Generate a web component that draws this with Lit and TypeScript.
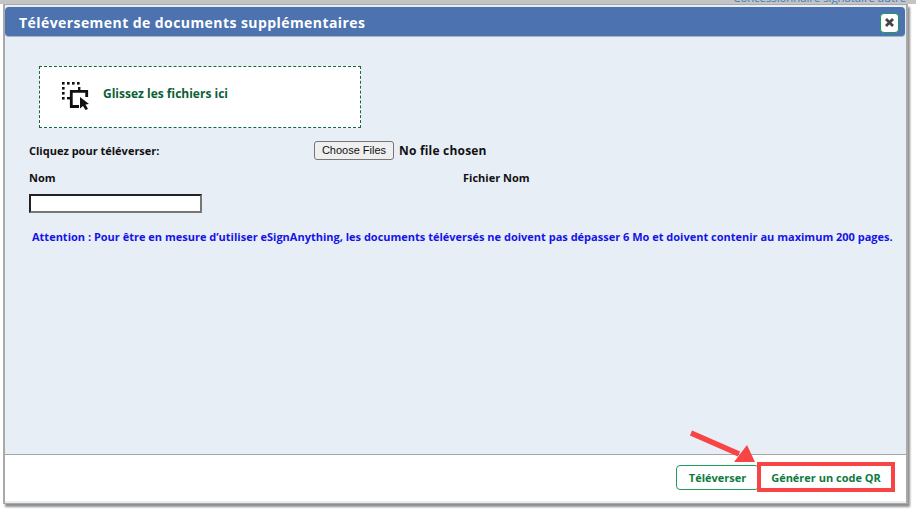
import { LitElement, html, css } from "lit";
import { customElement } from "lit/decorators.js";

@customElement("app-root")
export class AppRoot extends LitElement {
  static styles = css`
    :host {
      display: block;
      position: relative;
      width: 916px;
      height: 511px;
      overflow: hidden;
      background: #fff;
      font-family: "Open Sans", sans-serif;
      font-weight: 700;
      color: #111;
    }
    .behind {
      height: 4px;
      box-sizing: border-box;
      background: #c4c4c4;
      overflow: hidden;
      display: flex;
      justify-content: flex-end;
      padding-right: 10px;
      font: 400 11.3px/11px "Open Sans", sans-serif;
      color: #3a7cc0;
      white-space: nowrap;
    }
    .behind span { margin-top: -8px; }
    .dialog {
      box-sizing: border-box;
      width: 905px;
      height: 500px;
      margin-left: 3px;
      border: 1px solid #a9a9a9;
      border-left-width: 2px;
      border-right-width: 2px;
      background: #e8eef6;
      padding-top: 2px;
      display: flex;
      flex-direction: column;
      box-shadow: 2px 3px 2px #8f8f8f;
    }
    .header {
      height: 30px;
      flex: none;
      box-sizing: border-box;
      background: #4c72b0;
      border-radius: 4px;
      border-bottom: 1px solid #a9b3c2;
      display: flex;
      align-items: center;
      justify-content: space-between;
      padding: 2px 6px 0 14px;
      margin-right: 1px;
    }
    .title {
      color: #fff;
      font-size: 14px;
      letter-spacing: 0.43px;
    }
    .close {
      width: 19px;
      height: 20px;
      box-sizing: border-box;
      background: #fff;
      border: 1px solid #1e9a5a;
      border-radius: 4px;
      display: flex;
      align-items: center;
      justify-content: center;
    }
    .body {
      flex: 1;
      position: relative;
      padding: 29px 0 0 24px;
      font-size: 11px;
    }
    .drop {
      box-sizing: border-box;
      width: 322px;
      height: 62px;
      margin-left: 10px;
      border: 1px dashed #0b6b3a;
      background: #fff;
      display: flex;
      align-items: center;
      padding-left: 21px;
      gap: 12px;
      color: #0b5f35;
      font-size: 12px;
    }
    .drop svg { margin-bottom: 3px; }
    .drop span { margin-bottom: 8px; }
    .row1 {
      display: flex;
      align-items: center;
      margin-top: 13px;
      height: 18px;
    }
    .row1 .lbl { width: 285px; }
    .btn {
      box-sizing: border-box;
      width: 80px;
      height: 19px;
      border: 1px solid #767676;
      border-radius: 3px;
      background: #efefef;
      font: 400 11px "Liberation Sans", sans-serif;
      color: #111;
      display: flex;
      align-items: center;
      justify-content: center;
    }
    .nofile { margin-left: 5px; font-size: 12px; letter-spacing: 0.2px; }
    .row2 {
      display: flex;
      margin-top: 11px;
      line-height: 15px;
    }
    .row2 .lbl { width: 434px; }
    .input {
      box-sizing: border-box;
      width: 173px;
      height: 19px;
      margin-top: 9px;
      background: #fff;
      border: 2px solid;
      border-color: #222 #767676 #767676 #222;
    }
    .notice {
      margin: 16px 0 0 3px;
      color: #1414e6;
      font-size: 11px;
      white-space: nowrap;
      line-height: 15px;
    }
    .footer {
      flex: none;
      height: 47px;
      box-sizing: border-box;
      background: #fff;
      border-top: 1px solid #a5a5a5;
      margin-bottom: 2px;
      display: flex;
      justify-content: flex-end;
      align-items: center;
      padding: 0 13px 1px 0;
      color: #0c7a3e;
      font-size: 11px;
    }
    .fbtn {
      box-sizing: border-box;
      height: 25px;
      display: flex;
      align-items: center;
      justify-content: center;
      border-radius: 4px;
      background: #fff;
    }
    .fbtn.up { width: 83px; border: 1px solid #1e9a5a; }
    .fbtn.qr { width: 134px; }
    .mark {
      position: absolute;
      left: 757px;
      top: 462px;
      width: 138px;
      height: 30px;
      box-sizing: border-box;
      border: 4px solid #f84444;
    }
    .arrow { position: absolute; left: 685px; top: 425px; }
  `;

  render() {
    return html`
      <div class="behind"><span>Concessionnaire signataire autre</span></div>
      <div class="dialog">
        <div class="header">
          <span class="title">Téléversement de documents supplémentaires</span>
          <span class="close">
            <svg width="11" height="11" viewBox="0 0 11 11"><path d="M2 2 L9 9 M9 2 L2 9" stroke="#444" stroke-width="2.8" /></svg>
          </span>
        </div>
        <div class="body">
          <div class="drop">
            <svg width="30" height="30" viewBox="0 0 30 30">
              <g fill="#111">
                <rect x="1" y="1" width="2.6" height="2.6" /><rect x="6" y="1" width="2.6" height="2.6" /><rect x="11" y="1" width="2.6" height="2.6" /><rect x="16" y="1" width="2.6" height="2.6" />
                <rect x="1" y="6" width="2.6" height="2.6" /><rect x="1" y="11" width="2.6" height="2.6" /><rect x="1" y="16" width="2.6" height="2.6" />
                <rect x="17" y="6" width="2.4" height="4" />
                <rect x="6" y="16" width="4" height="2.4" />
              </g>
              <path d="M18 25.5 H10.3 V10.3 H25.7 V16" fill="none" stroke="#111" stroke-width="2.8" />
              <path d="M19 16 L28 23 L24.5 23.5 L27 28 L24.5 29 L22 25 L19 27.5 Z" fill="#111" />
            </svg>
            <span>Glissez les fichiers ici</span>
          </div>
          <div class="row1">
            <span class="lbl">Cliquez pour téléverser:</span>
            <span class="btn">Choose Files</span>
            <span class="nofile">No file chosen</span>
          </div>
          <div class="row2">
            <span class="lbl">Nom</span>
            <span>Fichier Nom</span>
          </div>
          <div class="input"></div>
          <div class="notice">Attention : Pour être en mesure d’utiliser eSignAnything, les documents téléversés ne doivent pas dépasser 6 Mo et doivent contenir au maximum 200 pages.</div>
        </div>
        <div class="footer">
          <span class="fbtn up">Téléverser</span>
          <span class="fbtn qr">Générer un code QR</span>
        </div>
      </div>
      <div class="mark"></div>
      <svg class="arrow" width="75" height="40" viewBox="0 0 75 40">
        <path d="M6 8 L54 29" stroke="#f84444" stroke-width="5.5" />
        <path d="M49 37 L70 37 L62 20 Z" fill="#f84444" />
      </svg>
    `;
  }
}
